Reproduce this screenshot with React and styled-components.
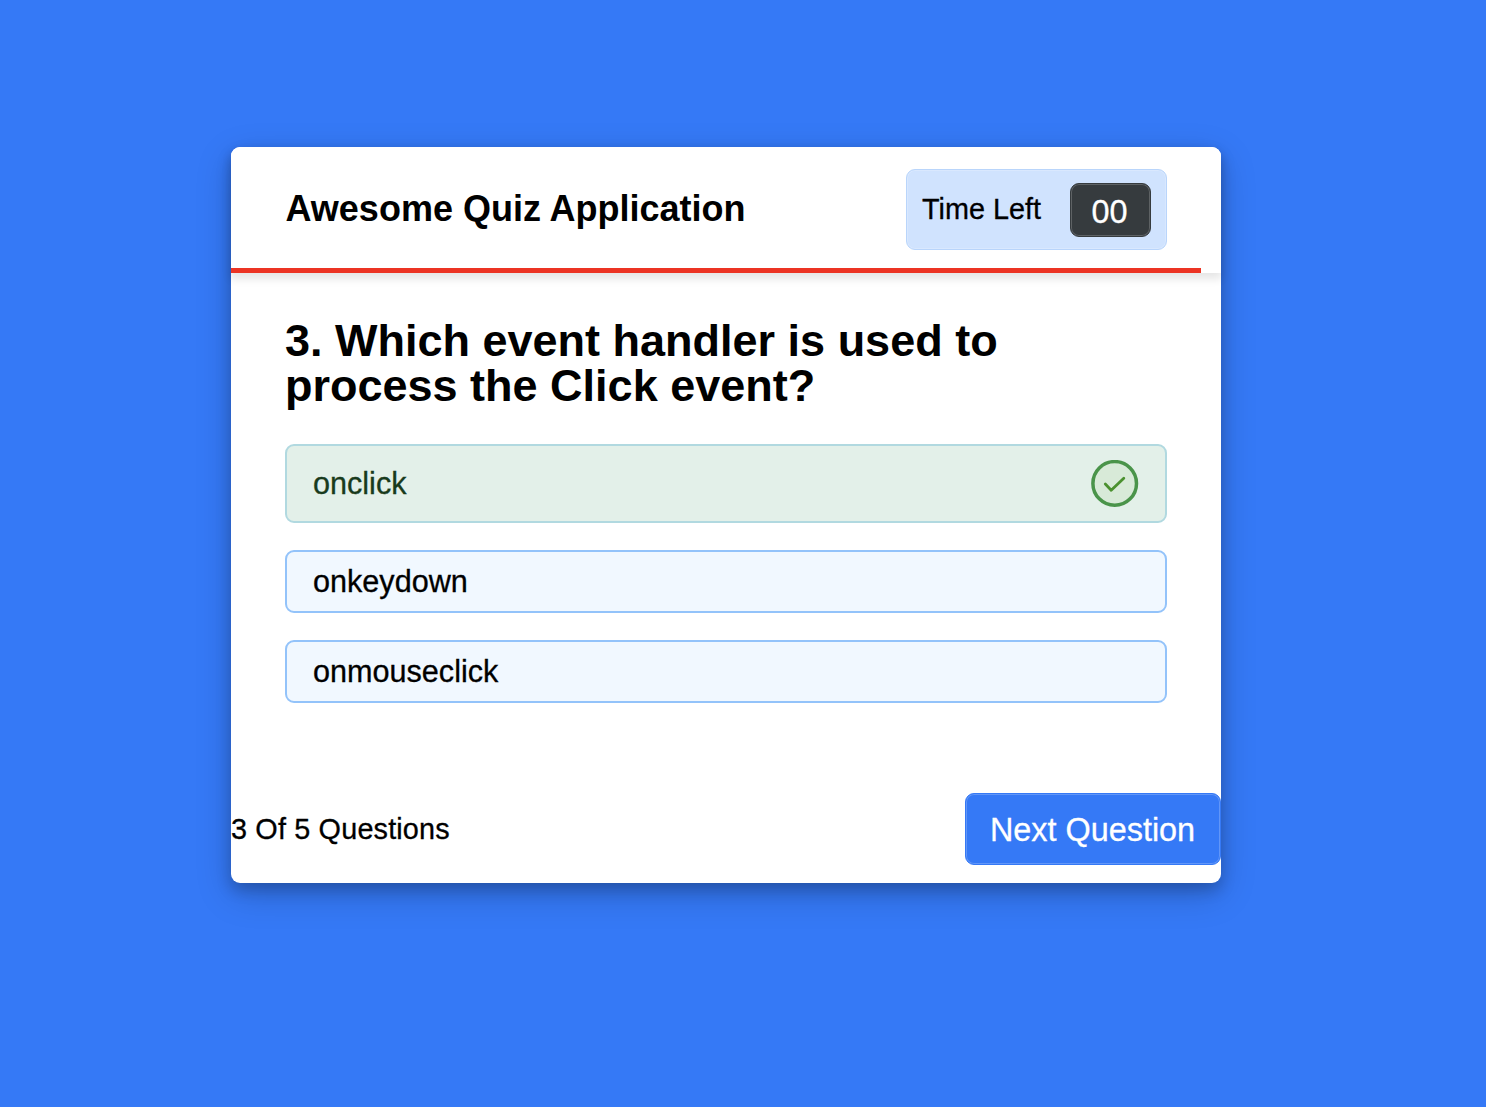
import React from "react";
import styled, { createGlobalStyle, css } from "styled-components";

const GlobalStyle = createGlobalStyle`
  * { margin: 0; padding: 0; box-sizing: border-box; }
  body { background: #3579f6; font-family: "Liberation Sans", Arial, sans-serif; }
`;

const regularText = css`
  -webkit-text-stroke: 0.3px currentColor;
`;

const Page = styled.main`
  height: 1107px;
  padding: 147px 0 0 231px;
  overflow: hidden;
`;

const Card = styled.section`
  width: 990px;
  height: 736px;
  display: flex;
  flex-direction: column;
  background: #fff;
  border-radius: 9px;
  box-shadow: 0 7px 15px rgba(0, 0, 0, 0.2), 0 11px 36px rgba(0, 0, 0, 0.19);
`;

const Header = styled.header`
  position: relative;
  height: 126px;
  flex: none;
  display: flex;
  align-items: flex-start;
  justify-content: space-between;
  padding: 22px 54px 0 54.5px;
  background: #fff;
  border-radius: 9px 9px 0 0;
  box-shadow: 0 5px 9px 1px rgba(0, 0, 0, 0.1);
`;

const Title = styled.h1`
  padding-top: 19px;
  font-size: 36px;
  line-height: 42px;
  font-weight: 700;
  color: #000;
  white-space: nowrap;
`;

const Timer = styled.div`
  width: 261px;
  height: 81px;
  display: flex;
  align-items: center;
  justify-content: space-between;
  padding: 0 15px;
  background: #d0e3fe;
  border: 1px solid #b9d5fb;
  border-radius: 9px;
  box-shadow: inset 0 0 0 1px rgba(255, 255, 255, 0.2);
`;

const TimerLabel = styled.span`
  ${regularText}
  padding-bottom: 2px;
  font-size: 28.8px;
  line-height: 32px;
  white-space: nowrap;
`;

const Seconds = styled.span`
  ${regularText}
  width: 81px;
  height: 54px;
  margin-top: 1px;
  display: grid;
  place-items: center;
  padding: 5px 2px 0 0;
  color: #fff;
  font-size: 32.4px;
  background: #363b3e;
  border: 1px solid #363b3e;
  border-radius: 9px;
  box-shadow: inset 0 0 0 1px rgba(255, 255, 255, 0.2);
`;

const TimeLine = styled.div`
  position: absolute;
  left: 0;
  bottom: 0;
  width: 970px;
  height: 5.4px;
  background: #ec3424;
`;

const Body = styled.div`
  flex: 1;
  padding: 45px 54px 0;
`;

const Question = styled.h2`
  width: 800px;
  margin-bottom: 36px;
  font-size: 45px;
  line-height: 45px;
  font-weight: 700;
`;

const Options = styled.div`
  display: flex;
  flex-direction: column;
  gap: 27px;
`;

const Option = styled.div`
  ${regularText}
  height: 63px;
  display: flex;
  align-items: center;
  justify-content: space-between;
  padding: 0 26px;
  font-size: 30.6px;
  background: #f1f8ff;
  border: 2px solid #93c3fa;
  border-radius: 9px;
  ${({ $correct }) => $correct && css`
    height: 79px;
    color: #183b1c;
    background: #e3f0e9;
    border-color: #b1d9e0;
  `}
`;

const Footer = styled.footer`
  height: 90px;
  flex: none;
  display: flex;
  align-items: flex-start;
  justify-content: space-between;
`;

const Progress = styled.p`
  ${regularText}
  padding-top: 20px;
  font-size: 28.8px;
  line-height: 32px;
  letter-spacing: 0.17px;
`;

const NextButton = styled.button`
  ${regularText}
  width: 256px;
  height: 72px;
  padding: 2px 1px 0 0;
  color: #fff;
  font-family: inherit;
  font-size: 32.4px;
  background: #3579f6;
  border: 1px solid #3579f6;
  border-radius: 9px;
  box-shadow: inset 0 0 0 1px rgba(255, 255, 255, 0.22);
`;

function Check() {
  return (
    <svg width="48" height="48" viewBox="0 0 48 48" fill="none">
      <circle cx="23.7" cy="23.4" r="21.8" fill="#d8ead8" stroke="#4a944a" strokeWidth="3.5" />
      <path
        d="M14.3 24 L20.2 30.2 L32.8 18.2"
        stroke="#4b912f"
        strokeWidth="2.8"
        strokeLinecap="round"
        strokeLinejoin="round"
      />
    </svg>
  );
}

export default function App() {
  return (
    <>
      <GlobalStyle />
      <Page>
        <Card>
          <Header>
            <Title>Awesome Quiz Application</Title>
            <Timer>
              <TimerLabel>Time Left</TimerLabel>
              <Seconds>00</Seconds>
            </Timer>
            <TimeLine />
          </Header>
          <Body>
            <Question>3. Which event handler is used to process the Click event?</Question>
            <Options>
              <Option $correct>onclick<Check /></Option>
              <Option>onkeydown</Option>
              <Option>onmouseclick</Option>
            </Options>
          </Body>
          <Footer>
            <Progress>3 Of 5 Questions</Progress>
            <NextButton>Next Question</NextButton>
          </Footer>
        </Card>
      </Page>
    </>
  );
}
